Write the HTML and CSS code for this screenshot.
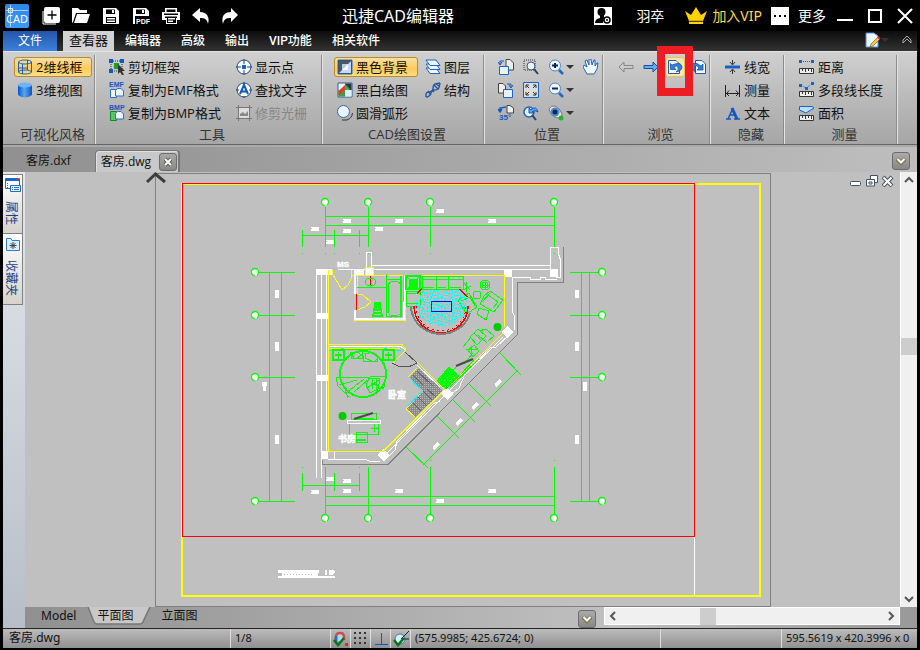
FILE: index.html
```html
<!DOCTYPE html>
<html lang="zh-CN">
<head>
<meta charset="utf-8">
<title>迅捷CAD编辑器</title>
<link rel="stylesheet" href="styles.css">
</head>
<body>
<div class="app">
  <header class="titlebar">
    <svg class="logo" viewBox="0 0 24 24"><defs><linearGradient id="lg" x1="0" y1="0" x2="0" y2="1"><stop offset="0" stop-color="#2f86e8"/><stop offset="1" stop-color="#3a9af8"/></linearGradient></defs><rect width="24" height="24" rx="2" fill="url(#lg)"/><path d="M1 6.500H23M5.500 1V23" stroke="#a9d2ff"/><rect x="3.500" y="4.500" width="4" height="4" fill="none" stroke="#d8ebff"/><text x="12" y="19" text-anchor="middle" class="logo-text">CAD</text></svg>
    <div class="quick">
      <button aria-label="新建"><svg viewBox="0 0 18 18"><path d="M1 4V17H14" fill="none" stroke="#fff"/><rect x="2" y="0" width="16" height="16" rx="2" fill="#fff"/><path d="M10 3.500V12.500M5.500 8H14.500" stroke="#000" stroke-width="1.300"/></svg></button>
      <button aria-label="打开"><svg viewBox="0 0 18 18"><path d="M0 16V1H6L8 3H15V6H4L1 15ZM5 7H18L15 16H2Z" fill="#fff"/></svg></button>
      <button aria-label="保存"><svg viewBox="0 0 18 18"><path d="M1 1H14L17 4V17H1Z" fill="#fff"/><path d="M4 2.500H13V7H4ZM4 10H14V16H4Z" fill="#000"/><path d="M10 3H12V6H10ZM5 11H13V12.500H5ZM5 13.500H13V15H5Z" fill="#fff"/></svg></button>
      <button aria-label="另存为PDF"><svg viewBox="0 0 18 18"><path d="M1 1H14L17 4V9H1ZM1 9H3V17H1Z" fill="#fff"/><path d="M4 2.500H13V7H4Z" fill="#000"/><path d="M10 3H12V6H10Z" fill="#fff"/><text x="4" y="17" class="pdf">PDF</text></svg></button>
      <button aria-label="打印"><svg viewBox="0 0 18 18"><path d="M3 1H15V5H18V13H15V17H4V13H0V5H3Z" fill="#fff"/><path d="M4.500 2.500H13.500V5H4.500ZM2 6.500H16V8H2ZM3 9.500H15V11H14V16H5V11H3Z" fill="#000"/><path d="M6 11H13V12.500H6ZM6 13.500H11V15H6Z" fill="#fff"/></svg></button>
      <button aria-label="撤销"><svg viewBox="0 0 18 18"><path d="M0 8 8 1V5C15 5 18 10 16 17C15 12 13 11 8 11V15Z" fill="#fff"/></svg></button>
      <button aria-label="重做"><svg viewBox="0 0 18 18"><path d="M16 8 9 1V5C2 5-1 10 1 17C2 12 4 11 9 11V15Z" fill="#fff"/></svg></button>
    </div>
    <h1>迅捷CAD编辑器</h1>
    <div class="account">
      <button class="user"><svg viewBox="0 0 18 18"><path fill="#fff" d="M0 0H18V18H0Z"/><circle cx="7.500" cy="5" r="4"/><path d="M6 8H10V11L9 16H1Q1 12 6 11Z"/><circle cx="13" cy="13" r="3" fill="#fff" stroke="#000" stroke-width="1.500"/><circle cx="13" cy="13" r="1"/></svg><span>羽卒</span></button>
      <button class="vip"><svg viewBox="0 0 22 18"><path d="M0 4 6 8 11 0 16 8 22 4 18 14H4ZM4 15H18V17H4Z" fill="#ffd100"/><path d="M4 14H18" stroke="#b87a00"/></svg><span>加入VIP</span></button>
      <button class="more"><svg viewBox="0 0 18 18"><path fill="#fff" d="M0 0H18V18H0Z"/><path d="M3 8H5V10H3ZM8 8H10V10H8ZM13 8H15V10H13Z"/></svg><span>更多</span></button>
    </div>
    <div class="window-buttons">
      <button aria-label="最小化"><svg viewBox="0 0 16 16"><path d="M0 12H16" stroke="#fff" stroke-width="2"/></svg></button>
      <button aria-label="最大化"><svg viewBox="0 0 16 16"><rect x="2" y="2" width="12" height="12" fill="none" stroke="#fff" stroke-width="2"/></svg></button>
      <button aria-label="关闭"><svg viewBox="0 0 16 16"><path d="M1 1 15 15M15 1 1 15" stroke="#fff" stroke-width="2"/></svg></button>
    </div>
  </header>

  <nav class="menu">
    <button class="file">文件</button>
    <button class="current">查看器</button>
    <button>编辑器</button>
    <button>高级</button>
    <button>输出</button>
    <button>VIP功能</button>
    <button>相关软件</button>
    <div class="menu-end">
      <button aria-label="样式"><svg class="i16" viewBox="0 0 16 16"><path d="M1 1H9L13 4V15H1Z" fill="#eef6ff" stroke="#4f8fe0"/><path d="M6 12 13 5 15 7 8 14 5 15Z" fill="#f5c744" stroke="#6a5210" stroke-width=".6"/><path d="M13 5 15 7" stroke="#d23" stroke-width="2"/></svg><i class="caret"></i></button>
      <button aria-label="折叠"><svg class="i10" viewBox="0 0 10 10"><path d="M1 5 5 1 9 5V8L5 4 1 8Z" fill="none" stroke="#aaa"/></svg></button>
    </div>
  </nav>

  <section class="ribbon">
    <div class="group g-style">
      <div class="cols"><div class="col">
        <button class="cmd on"><svg class="i16" viewBox="0 0 16 16"><g fill="none" stroke="#1663c7"><ellipse cx="8" cy="3" rx="6.500" ry="2"/><ellipse cx="8" cy="13" rx="6.500" ry="2"/><path d="M1.500 3V13M14.500 3V13M5.500 5V15M10.500 1V11M1 9H11"/></g></svg>2维线框</button>
        <button class="cmd"><svg class="i16" viewBox="0 0 16 16"><defs><linearGradient id="cy"><stop offset="0" stop-color="#0a55c4"/><stop offset=".45" stop-color="#58a6f5"/><stop offset="1" stop-color="#0f55bd"/></linearGradient></defs><path d="M1 3V13Q8 18 15 13V3Z" fill="url(#cy)"/><ellipse cx="8" cy="3" rx="7" ry="2.500" fill="#6db3fa"/></svg>3维视图</button>
      </div></div>
      <h2>可视化风格</h2>
    </div>
    <div class="group g-tools">
      <div class="cols"><div class="col wide">
        <button class="cmd"><svg class="i16" viewBox="0 0 16 16"><path d="M2 2H13V12H2Z" fill="none" stroke="#333" stroke-dasharray="1 1"/><path d="M0 0H4V4H0ZM11 0H15V4H11ZM0 10H4V14H0Z" fill="#1457c0"/><path d="M5 4H10V10H5Z" fill="#18a028"/><path d="M9 5 16 12H13L15 16 13 16 11 13 9 15Z" fill="#333"/></svg>剪切框架</button>
        <button class="cmd"><svg class="i16" viewBox="0 0 16 16"><text x="0" y="5" class="fmt">EMF</text><g fill="#edf6ff" stroke="#2d6fc8"><path d="M1.500 7.500H7.500V15.500H1.500Z"/><path d="M8.500 6.500H12L14.500 9V14H6.500V8.500Z"/></g></svg>复制为EMF格式</button>
        <button class="cmd"><svg class="i16" viewBox="0 0 16 16"><text x="0" y="5" class="fmt">BMP</text><path d="M1.500 6.500H7.500V15.500H1.500Z" fill="#59c863" stroke="#138820"/><path d="M8.500 6.500H12L14.500 9V14H6.500V8.500Z" fill="#edf6ff" stroke="#2d6fc8"/></svg>复制为BMP格式</button>
      </div><div class="col">
        <button class="cmd"><svg class="i16" viewBox="0 0 16 16"><circle cx="8" cy="8" r="7" fill="#f4faff" stroke="#29486e"/><path d="M8 0V5M8 11V16M0 8H5M11 8H16" stroke="#29486e"/><path d="M6 6H10V10H6Z" fill="#1663c7"/></svg>显示点</button>
        <button class="cmd"><svg class="i16" viewBox="0 0 16 16"><circle cx="8" cy="8" r="7" fill="#f4faff" stroke="#29486e"/><path d="M8 0V3M0 8H3M13 8H16M8 14V16" stroke="#29486e"/><path d="M4 12 8 3 12 12M5.500 9.500H10" fill="none" stroke="#1457c0" stroke-width="2"/></svg>查找文字</button>
        <button class="cmd" disabled><svg class="i16" viewBox="0 0 16 16"><path d="M2.500 0V16M13.500 0V16M0 2.500H16M0 13.500H16" stroke="#777"/><path d="M3 3H13V13H3Z" fill="#ddd"/><path d="M4 11V9L7 7 9 9 12 6V11Z" fill="#888"/></svg>修剪光栅</button>
      </div></div>
      <h2>工具</h2>
    </div>
    <div class="group g-draw">
      <div class="cols"><div class="col">
        <button class="cmd on"><svg class="i16" viewBox="0 0 16 16"><path d="M1 1H15V15H1Z" fill="#1f3b66" stroke="#2d6fc8"/><path d="M2 2H14L2 14Z" fill="#555"/><path d="M14 2V14H2Z" fill="#c4dafa"/><path d="M5 5H11V11H5Z" fill="#fff"/><path d="M5 5H11L5 11Z" fill="#bcd"/></svg>黑色背景</button>
        <button class="cmd"><svg class="i16" viewBox="0 0 16 16"><path d="M1 1H15V15H1Z" fill="#f4f4f4" stroke="#2d5f9c"/><path d="M8 1.500H14.500V8H8Z" fill="#2a3340"/><path d="M1.500 8H8V14.500H1.500Z" fill="#2fa848"/><path d="M1.500 9 8 3V8L3 13H1.500Z" fill="#e23c32"/><path d="M8 2 13 7 8 12Z" fill="#34b34a"/><path d="M8 8H14.500V14.500H8Z" fill="#e5f0ff"/></svg>黑白绘图</button>
        <button class="cmd"><svg class="i16" viewBox="0 0 16 16"><circle cx="6.500" cy="6.500" r="6" fill="#e9f4ff" stroke="#3469b0"/><path d="M15.500 8Q15 13 10 15H5" fill="none" stroke="#333"/></svg>圆滑弧形</button>
      </div><div class="col">
        <button class="cmd"><svg class="i16" viewBox="0 0 16 16"><g fill="#eaf5ff" stroke="#1f63ba"><path d="M1 9H11L15 14.500H5Z"/><path d="M1 5H11L15 10.500H5Z"/><path d="M1 1H11L15 6.500H5Z"/></g></svg>图层</button>
        <button class="cmd"><svg class="i16" viewBox="0 0 16 16"><g fill="none" stroke="#2458a4" stroke-width="1.400"><path d="M1 15C0 6 8 13 8 7S10 2 15 1"/><path d="M1 15C8 15 4 8 9 8S14 7 15 1"/><path d="M3 9 6 13M9 3 13 7M7 8 9 10M11 2 14 4"/></g></svg>结构</button>
      </div></div>
      <h2>CAD绘图设置</h2>
    </div>
    <div class="group g-pos">
      <div class="cols"><div class="col">
        <button class="cmd" aria-label="上一视图"><svg class="i16" viewBox="0 0 16 16"><path d="M8 .5H12L15.500 4V11H8Z" fill="#eee" stroke="#444"/><path d="M1.500 7.500H10.500V15.500H1.500Z" fill="#e8f3ff" stroke="#1f63ba"/><path d="M6 2H2V5M0 3 2 6 4 3" fill="none" stroke="#1457c0"/></svg></button>
        <button class="cmd" aria-label="下一视图"><svg class="i16" viewBox="0 0 16 16"><path d="M.5 1.500H5L7.500 4V11H.5Z" fill="#eee" stroke="#444"/><path d="M5.500 7.500H14.500V15.500H5.500Z" fill="#e8f3ff" stroke="#1f63ba"/><path d="M9 2H13V5M11 3 13 6 15 3" fill="none" stroke="#1457c0"/></svg></button>
        <button class="cmd" aria-label="旋转35°"><svg class="i16" viewBox="0 0 16 16"><path d="M9 .5H12L15.500 3V8H9Z" fill="#eee" stroke="#444"/><path d="M8 2 2 3V6M0 4 2 7 4 4" fill="none" stroke="#1457c0" stroke-width="1.400"/><text x="1" y="15" class="deg">35°</text></svg></button>
      </div><div class="col">
        <button class="cmd" aria-label="窗口缩放"><svg class="i16" viewBox="0 0 16 16"><path d="M1 1H12V11H1Z" fill="none" stroke="#333" stroke-dasharray="1 1"/><circle cx="8" cy="7" r="4" fill="#e8f4ff" stroke="#457"/><path d="M11 10 15 15" stroke="#246" stroke-width="2"/></svg></button>
        <button class="cmd" aria-label="全部显示"><svg class="i16" viewBox="0 0 16 16"><path d="M.5.5H15.500V15.500H.5Z" fill="#ddd" stroke="#1663c7"/><path d="M3 6V3H6M3 3 6 6M10 3H13V6M13 3 10 6M3 10V13H6M3 13 6 10M10 13H13V10M13 13 10 10" fill="none" stroke="#333"/></svg></button>
        <button class="cmd" aria-label="还原缩放"><svg class="i16" viewBox="0 0 16 16"><circle cx="6" cy="7" r="5" fill="#e8f4ff" stroke="#1f63ba" stroke-width="1.500"/><path d="M9 10 13 15" stroke="#246" stroke-width="2"/><path d="M6 8V3L8 5Q13 0 15 7Q11 4 9 7L11 8Z" fill="#60a7ef" stroke="#1457c0"/></svg></button>
      </div><div class="col">
        <button class="cmd" aria-label="放大"><svg class="i16" viewBox="0 0 16 16"><circle cx="7" cy="6.500" r="5.500" fill="#eef7ff" stroke="#4a83cd"/><path d="M11 11 15 15" stroke="#1d67c7" stroke-width="2.500"/><path d="M7 4V9M4 6.500H10" stroke="#08265c" stroke-width="2"/></svg><i class="caret"></i></button>
        <button class="cmd" aria-label="缩小"><svg class="i16" viewBox="0 0 16 16"><circle cx="7" cy="6.500" r="5.500" fill="#eef7ff" stroke="#4a83cd"/><path d="M11 11 15 15" stroke="#1d67c7" stroke-width="2.500"/><path d="M4 6.500H10" stroke="#08265c" stroke-width="2"/></svg><i class="caret"></i></button>
        <button class="cmd" aria-label="视点"><svg class="i16" viewBox="0 0 16 16"><path d="M1 4Q3 0 7 1Q12 3 14 9Q14 14 10 13Q3 12 1 4Z" fill="#e4e4e4" stroke="#777"/><circle cx="7" cy="7" r="4.500" fill="#4b8fd0"/><circle cx="7" cy="7" r="2.500" fill="#102a50"/><circle cx="13" cy="13" r="2.500" fill="#20b52a"/></svg><i class="caret"></i></button>
      </div><div class="col">
        <button class="cmd" aria-label="平移"><svg class="i16" viewBox="0 0 16 16"><path d="M4 15 0 8 1 6 4 8 2 2 4 1 6 6 6 0 8 0 9 6 11 1 12 1 12 7 14 4 15 4 14 10 11 15Z" fill="#f0f8ff" stroke="#1f63ba"/></svg></button>
      </div></div>
      <h2>位置</h2>
    </div>
    <div class="group g-browse">
      <div class="cols">
        <button class="cmd" aria-label="后退"><svg class="i16" viewBox="0 0 16 16"><path d="M1 8 6 3V6.500H15V9.500H6V13Z" fill="#ccc" stroke="#858585"/></svg></button>
        <button class="cmd" aria-label="前进"><svg class="i16" viewBox="0 0 16 16"><path d="M15 8 10 3V6.500H1V9.500H10V13Z" fill="#64acf3" stroke="#174f9d"/></svg></button>
        <button class="cmd marked" aria-label="逆时针旋转"><svg class="i16" viewBox="0 0 16 16"><path d="M1.500 1.500H9L12.500 5V14.500H1.500Z" fill="#f3f9ff" stroke="#225ba8"/><path d="M3.500 4.500V10.500H9L7 8.500Q10 6 11 8Q12 11 9 13Q15 12 15 8Q14 2 5 6Z" fill="#2f83dd" stroke="#0e4696" stroke-width=".7"/></svg></button>
        <button class="cmd" aria-label="顺时针旋转"><svg class="i16" viewBox="0 0 16 16"><path d="M4.500 1.500H11L14.500 5V14.500H4.500Z" fill="#f3f9ff" stroke="#225ba8"/><path d="M12 5V11H6L8 9Q5 5 4 8Q3 11 5 13Q-1 11 1 6Q4 2 10 7Z" fill="#2f83dd" stroke="#0e4696" stroke-width=".7"/></svg></button>
      </div>
      <h2>浏览</h2>
    </div>
    <div class="group g-hide">
      <div class="cols"><div class="col">
        <button class="cmd"><svg class="i16" viewBox="0 0 16 16"><path d="M0 8H15" stroke="#1663c7" stroke-width="3"/><path d="M7.500 1V5M7.500 15V11M5 3 7.500 6 10 3M5 13 7.500 10 10 13" fill="none" stroke="#333"/></svg>线宽</button>
        <button class="cmd"><svg class="i16" viewBox="0 0 16 16"><path d="M.5 3V15M14.500 3V15M1 11.500H14M4 8.500 1.500 11.500 4 14M11 8.500 13.500 11.500 11 14" fill="none" stroke="#222"/></svg>测量</button>
        <button class="cmd"><svg class="i16" viewBox="0 0 16 16"><path d="M1 14H6M9 14H15M3 14 8 3M5 10H11" fill="none" stroke="#1457c0" stroke-width="1.500"/><path d="M7 3 12 14" stroke="#1457c0" stroke-width="3"/></svg>文本</button>
      </div></div>
      <h2>隐藏</h2>
    </div>
    <div class="group g-measure">
      <div class="cols"><div class="col">
        <button class="cmd"><svg class="i16" viewBox="0 0 16 16"><path d="M0 1H3V4H0ZM12 1H15V4H12Z" fill="#1663c7"/><path d="M4 2.500H12" stroke="#1663c7" stroke-dasharray="1 1"/><path d="M.5 9.500H14.500V14.500H.5Z" fill="#eee" stroke="#333"/><path d="M3.500 10V12M6.500 10V13M9.500 10V12M12.500 10V13" stroke="#333"/></svg>距离</button>
        <button class="cmd"><svg class="i16" viewBox="0 0 16 16"><path d="M0 2H3V5H0ZM6 5H9V8H6ZM12 0H15V3H12Z" fill="#1663c7"/><path d="M2 3 7 6 13 2" fill="none" stroke="#1663c7" stroke-dasharray="1 1"/><path d="M.5 9.500H14.500V14.500H.5Z" fill="#eee" stroke="#333"/><path d="M3.500 10V12M6.500 10V13M9.500 10V12M12.500 10V13" stroke="#333"/></svg>多段线长度</button>
        <button class="cmd"><svg class="i16" viewBox="0 0 16 16"><path d="M.5 1.500H13L15 3 7 8 .5 5Z" fill="#bcdcff" stroke="#1663c7"/><path d="M.5 10.500H14.500V15.500H.5Z" fill="#eee" stroke="#333"/><path d="M3.500 11V13M6.500 11V14M9.500 11V13M12.500 11V14" stroke="#333"/></svg>面积</button>
      </div></div>
      <h2>测量</h2>
    </div>
  </section>

  <nav class="doc-tabs">
    <button class="doc">客房.dxf</button>
    <div class="doc open"><button class="doc-name">客房.dwg</button><button class="box" aria-label="关闭"><svg class="i10" viewBox="0 0 10 10"><path d="M2 2 8 8M8 2 2 8" stroke="#655d42" stroke-width="4"/><path d="M2 2 8 8M8 2 2 8" stroke="#fff" stroke-width="2"/></svg></button></div>
    <button class="box end" aria-label="标签列表"><svg class="i10" viewBox="0 0 10 10"><path d="M1 3 5 7 9 3" fill="none" stroke="#7c7140" stroke-width="4"/><path d="M1.500 3 5 6.500 8.500 3" fill="none" stroke="#fff" stroke-width="2"/></svg></button>
  </nav>

  <main class="work">
    <aside class="side">
      <button><svg class="i16" viewBox="0 0 16 16"><path d="M.5 1.500H14.500V11.500H.5Z" fill="#fff" stroke="#236bc4"/><path d="M1 1H14V4H1Z" fill="#1764ce"/><path d="M12 1H14V3H12Z" fill="#e33"/><path d="M2.500 6V11" stroke="#236bc4" stroke-dasharray="1 1"/><path d="M5.500 8.500H15.500V14.500H5.500Z" fill="#eef7ff" stroke="#236bc4"/><path d="M7 10.500H8M9 10.500H14M7 12.500H8M9 12.500H14" stroke="#236bc4"/></svg><span>属性</span></button>
      <button><svg class="i16" viewBox="0 0 16 16"><path d="M1.500 2.500H6L7 4.500H14.500V14.500H1.500Z" fill="#dceeff" stroke="#2a80d8"/><path d="M8 6V13M4.500 9.500H11.500M5.500 7 10.500 12M10.500 7 5.500 12" stroke="#345"/></svg><span>收藏夹</span></button>
    </aside>

    <div class="canvas">
      <svg class="drawing" viewBox="25 172 875 435" shape-rendering="crispEdges">
        <defs>
          <pattern id="hatch" width="2" height="2" patternUnits="userSpaceOnUse"><rect width="2" height="2" fill="#8a8a8a"/><path d="M0 0H1V1H0Z" fill="#b8b8b8"/></pattern>
          <pattern id="rug" width="11" height="9" patternUnits="userSpaceOnUse"><path d="M0 0H3V1H0ZM4 1H6V3H4ZM1 2H2V5H1ZM3 4H5V5H3ZM6 4H7V6H6ZM0 6H2V7H0ZM2 1H3V2H2ZM5 3H6V4H5ZM8 0H10V1H8ZM7 2H8V3H7ZM9 2H10V4H9ZM8 5H11V6H8ZM3 6H4V8H3ZM5 7H8V8H5ZM9 7H10V9H9ZM1 8H3V9H1ZM10 1H11V2H10Z" fill="#00ffff"/></pattern>
          <g id="bubble" shape-rendering="auto"><circle r="3.500" fill="#fff" stroke="#0f0" stroke-width="1.300"/><path d="M-1.500-1.500H2V3.500H-.5V1H-1.500Z" fill="#fff"/></g>
          <g id="num"><path d="M-4 0H4" stroke="#fff" stroke-width="4"/><path d="M-3.500-1.500V-.5" stroke="#c0c0c0"/></g>
        </defs>
        <g fill="none">
          <path d="M155.500 606.500V173.500H770.500V606.500Z" stroke="#808080"/>
          <path d="M182 184H760V596H182Z" stroke="#ff0" stroke-width="2"/>
          <path d="M694.500 537V595" stroke="#fff"/>
          <path d="M182.500 183.500H694.500V536.500H182.500Z" stroke="#f00"/>
          <path d="M147 182 155.500 174 165 182" stroke="#3c3c3c" stroke-width="3" shape-rendering="auto"/>

          <path stroke="#0f0" d="M325.500 207V247M368.500 207V247M430.500 207V247M554.500 207V247M325 216.500H555M325 225.500H555M302 235.500H369M302.500 230V247M334.500 230V247M359.500 230V247M302 253.500H303M325 253.500H326M334 253.500H335M359 253.500H360M368 253.500H369M430 253.500H431M554 253.500H555
            M258 272.500H295M258 315.500H295M258 377.500H295M258 501.500H295M269.500 272V501M281.500 272V501
            M570 272.500H599M570 315.500H599M570 377.500H599M570 501.500H599M581.500 272V501M589.500 272V501
            M325.500 467V514M368.500 467V514M430.500 467V514M554.500 467V514M325 496.500H555M325 505.500H555M302 485.500H360M302.500 473V491M334.500 473V491M359.500 473V491M302 467.500H303M359 467.500H360M430 460.500H431M554 460.500H555
            M424 464 517 371M406 447 428 468M437 416 459 438M453 400 475 422M469 384 491 406M500 353 521 375"/>
          <path stroke="#0f0" stroke-width="2" d="M423 464H425M516 371H518"/>

          <path stroke="#808080" d="M563.500 247V282.500H517.500V334.500L388 464.500H322.500V460"/>
          <g stroke="#fff">
            <path d="M316.500 270V478M321.500 275V478M326.500 275V452M371 265.500H550M338 269.500H504M512 269.500H550M550.500 269V247.500H558.500V254L560.500 260V277.500H556M512 277.500H530V279.500H540V277.500H545V279.500H557M512.500 277V312L514.500 316V330M366.500 267V252.500H371.500V267M329 346.500H401L405 350M334.500 452V459M328 459.500H366L370 461.500H380"/>
            <path d="M503 337 386 454M509 335 496 347 491 347 474 365 465 374 459 388 450 395M440 401 433 404 397 441 395 450 388 457M417 365 440 387"/>
          </g>
          <path fill="#fff" d="M316 269H332V275H316ZM317 313H328V319H317ZM317 375H328V381H317ZM321 451H328V459H321ZM504 269H512V277H504ZM550 269H558V277H550ZM501 332 507 326 514 332 507 338ZM440 393 446 387 453 394 447 400ZM377 455 383 449 390 456 384 461ZM354 270H364V275H354Z"/>
          <g stroke="#ff0">
            <path d="M328.500 275V451.500H383L442 392.500M453 383 504 332M352 275.500H504.500V327M329 344.500H402L406 350 393 363M354 320.500H405.500V275M357.500 275V294M329 348.500H400M417 362 446 391M417 368 408 377M422 391 406 409 415 417M328 270V275"/>
            <path d="M332.500 270V274L342 290 348 285Q352 280 352 270M357 294 363 295 371 302 365 307 357 310"/>
            <path d="M365 267.500H373V275.500H365Z" fill="#fff"/>
          </g>
          <path stroke="#fff" stroke-width="2" d="M355 275V294M355 310V319H404V276"/>
          <path stroke="#f00" d="M356.500 294V310M370.500 276V287"/>
          <path stroke="#00f5ff" d="M403.500 274V302M341 348.500H344M384 348.500H387M330 350.500H333M389 350.500H401M410 378 422 391 408 406"/>
          <path stroke="#0f0" d="M333 349.500H389"/>

          <g stroke="#0f0">
            <path d="M357 287.500H386M386.500 275V316.500H402M386 279.500H401"/>
            <path d="M401 276V317" stroke-width="2"/>
            <ellipse cx="370.500" cy="282" rx="5" ry="4"/>
            <rect x="388.500" y="281.500" width="12" height="34" rx="4"/>
            <path d="M375 303H380L382 316H373ZM376 304H379V310H376ZM373 313H382" stroke-width="1.500"/>
            <rect x="406" y="276" width="14" height="13" stroke-width="1.500"/>
            <path d="M406 276 420 290M420 276 406 290M409 279H417V287H409Z"/>
            <path d="M410 280H416V286H410Z" fill="#0f0"/>
            <path d="M406 291H420V306H406ZM407 293.500H419M407 303.500H419"/>
            <path d="M422 276H463V289H422ZM436.500 276V289M448.500 276V289M422 279.500H463M424 287H434M438 287H446M450 287H461"/>
            <circle cx="485" cy="285" r="5"/><circle cx="485" cy="285" r="3"/>
            <path d="M485 280V290M480 285H490M464 283 470 290M463 290 471 286M466 282V292"/>
            <circle cx="477" cy="295" r="4"/>
            <path d="M458 300 469 293 477 307 466 314ZM461 301 470 297 475 306M459 303 467 312M484 296 490 291 503 300 494 312 480 304ZM488 295 498 302 493 308M482 302 490 293M479 308 489 311 486 320 477 314Z"/>
            <path d="M470 337 478 329 486 336 477 345ZM474 333 482 341M479 331 486 329 494 336 488 341M471 337 463 347M478 335 487 343"/>
            <path d="M468 350 474 345 479 351 473 357ZM466 349H477M471 346V354M473 353 464 364M456 367 450 373M479 359 450 387M474 360 461 374"/>
            <path d="M437 381 449 367 459 376 446 389Z" fill="#0f0"/>
            <path d="M333 350H344V360H333ZM383 350H394V360H383ZM335 355H342M338.500 352V359M385 355H392M388.500 352V359" stroke-width="1.500"/>
            <circle cx="363" cy="374" r="23" stroke-width="2"/>
            <path d="M336 377Q354 379 370 377T386 377M336 377 338 386 349 397M339 385 357 380M346 393 364 379M354 392 369 379M350 353 357 352 362 355 355 359ZM365 354 372 352 378 358 374 362 365 358ZM369 378 380 379 378 389 370 393 366 386ZM371 383 378 386"/>
            <path d="M386 376 384 387 376 393M345 390 348 398M351 352V358H362V352M363 356V361H377V355M372 379V389M376 379V391M367 388 379 380"/>
            <path d="M351 413H376V419H351ZM354 418H373V421M349 423H378V434H349ZM356 432H367V442H356ZM371 428H378M374.500 424V432"/>
            <path d="M357 440H366" stroke-width="2"/>
          </g>
          <path d="M439 382 449 371 455 377 445 387M441 380 452 381M447 374 448 387" stroke="#b8bdb8" stroke-dasharray="1 2"/>
          <path d="M347 420H380V423H347Z" stroke="#fff"/>
          <path d="M354 419 373 413M456 366 473 359" stroke="#4a4a4a" stroke-width="2" shape-rendering="auto"/>
          <g fill="#00cc00" shape-rendering="auto"><circle cx="342.500" cy="416" r="4"/><circle cx="497.500" cy="327" r="4"/></g>

          <path d="M420 290H462L467 300 467 308A27 26 0 0 1 415 306V300H420Z" fill="url(#rug)"/>
          <path d="M414 306A27 27 0 0 0 468 306M417 293 422 289M460 289 467 297" stroke="#f00" stroke-width="1.500"/>
          <path d="M416 306A25 25 0 0 0 466 306" stroke="#f00" stroke-dasharray="2 3"/>
          <path d="M411 307A30 28 0 0 0 470 313" stroke="#808080" stroke-width="2"/>
          <path d="M431.500 301.500H451.500V311.500H431.500Z" stroke="#00f"/>

          <path fill="url(#hatch)" d="M418 368 443 391 415 417 407 409 423 391 410 377Z"/>
          <path d="M423 391 432 400M418 397 427 406M413 403 421 411M413 375 423 385M417 371 433 386M427 389 436 397" stroke="#626262"/>
          <path d="M405 352 417 363M392 363Q404 371 417 363" stroke="#555"/>
        </g>
        <use href="#bubble" x="325" y="202"/><use href="#bubble" x="368" y="202"/><use href="#bubble" x="430" y="202"/><use href="#bubble" x="554" y="202"/>
        <use href="#bubble" x="255" y="272"/><use href="#bubble" x="255" y="315"/><use href="#bubble" x="255" y="377"/><use href="#bubble" x="255" y="501"/>
        <use href="#bubble" x="602" y="272"/><use href="#bubble" x="602" y="315"/><use href="#bubble" x="602" y="377"/><use href="#bubble" x="602" y="501"/>
        <use href="#bubble" x="325" y="518"/><use href="#bubble" x="368" y="518"/><use href="#bubble" x="430" y="518"/><use href="#bubble" x="554" y="518"/>
        <use href="#num" x="347" y="221"/><use href="#num" x="399" y="221"/><use href="#num" x="492" y="221"/><use href="#num" x="440" y="211"/><use href="#num" x="315" y="229"/><use href="#num" x="347" y="231"/><use href="#num" x="379" y="229"/><use href="#num" x="330" y="242"/>
        <use href="#num" x="315" y="492"/><use href="#num" x="347" y="491"/><use href="#num" x="399" y="491"/><use href="#num" x="492" y="491"/><use href="#num" x="440" y="501"/><use href="#num" x="330" y="479"/><use href="#num" x="347" y="481"/>
        <g fill="#fff"><path d="M275 290H279V298H275ZM275 342H279V351H275ZM275 435H279V444H275ZM262 382H267V386H266V391H263V386H262ZM575 290H579V298H575ZM575 342H579V351H575ZM575 435H579V444H575ZM583 382H587V391H583Z"/></g>
        <use href="#num" transform="translate(436 446) rotate(-45)"/><use href="#num" transform="translate(459 422) rotate(-45)"/><use href="#num" transform="translate(475 406) rotate(-45)"/><use href="#num" transform="translate(498 383) rotate(-45)"/>
        <text x="337" y="267" class="room latin">MS</text>
        <text x="388" y="398" class="room">卧室</text>
        <text x="338" y="442" class="room">书房</text>
        <path fill="#fff" d="M278 570H319V573H278ZM282 573H318V576H282ZM325 570H327V575H325ZM329 570H333L335 572 333 575H329ZM278 576H335V578H278Z"/>
        <path d="M284 574.500H314" stroke="#c0c0c0" stroke-dasharray="1 2"/>
      </svg>
      <div class="mdi">
        <button aria-label="最小化窗口"><svg viewBox="0 0 12 12"><rect x=".5" y="6.500" width="10" height="4" rx="1" fill="#fff" stroke="#44505e"/></svg></button>
        <button aria-label="还原窗口"><svg viewBox="0 0 12 12"><path d="M4.500.5H11.500V7.500H4.500Z" fill="#fff" stroke="#44505e"/><path d="M.5 4.500H8.500V11H.5Z" fill="#fff" stroke="#44505e"/><path d="M3 7H6V9H3Z" fill="none" stroke="#44505e"/></svg></button>
        <button aria-label="关闭窗口"><svg viewBox="0 0 12 12"><path d="M1 2 10 11M10 2 1 11" stroke="#44505e" stroke-width="4"/><path d="M1.500 2.500 9.500 10.500M9.500 2.500 1.500 10.500" stroke="#fff" stroke-width="2"/></svg></button>
      </div>
    </div>
    <div class="vscroll">
      <button aria-label="向上"><svg class="i10" viewBox="0 0 10 10"><path d="M1 7 5 3 9 7" fill="none" stroke="#555" stroke-width="2"/></svg></button>
      <i class="space a"></i><i class="thumb"></i><i class="space b"></i>
      <button aria-label="向下"><svg class="i10" viewBox="0 0 10 10"><path d="M1 3 5 7 9 3" fill="none" stroke="#555" stroke-width="2"/></svg></button>
    </div>

    <div class="sheets">
      <button>Model</button>
      <button class="active"><svg viewBox="0 0 64 19" preserveAspectRatio="none"><path d="M1 0 7 16Q8 18 10 18H52Q54 18 55 16L62 0" fill="#c8c8c8" stroke="#777" stroke-width="1.500"/></svg><span>平面图</span></button>
      <button>立面图</button>
      <button class="box end" aria-label="布局列表"><svg class="i10" viewBox="0 0 10 10"><path d="M1 3 5 7 9 3" fill="none" stroke="#7c7140" stroke-width="4"/><path d="M1.500 3 5 6.500 8.500 3" fill="none" stroke="#fff" stroke-width="2"/></svg></button>
      <div class="hscroll">
        <button aria-label="向左"><svg class="i10" viewBox="0 0 10 10"><path d="M7 1 3 5 7 9" fill="none" stroke="#555" stroke-width="2"/></svg></button>
        <i class="space a"></i><i class="thumb"></i><i class="space b"></i>
        <button aria-label="向右"><svg class="i10" viewBox="0 0 10 10"><path d="M3 1 7 5 3 9" fill="none" stroke="#555" stroke-width="2"/></svg></button>
      </div>
    </div>
  </main>

  <footer class="status">
    <span class="name">客房.dwg</span>
    <span>1/8</span>
    <button aria-label="对象捕捉"><svg class="i16" viewBox="0 0 16 16"><path d="M3 11V6Q3 2 7 2T11 6V9" fill="#a8dcec" stroke="#d24a4a" stroke-width="2.500"/><path d="M3 5V11" stroke="#36c" stroke-width="2.500"/><path d="M1 9 5 14 11 7" fill="none" stroke="#0a7417" stroke-width="2.500"/><path d="M12 12H15V15H12Z" fill="#e22"/></svg></button>
    <button aria-label="栅格"><svg class="i16" viewBox="0 0 16 16"><path d="M1 2H16M1 7H16M1 12H16" stroke="#333" stroke-width="2" stroke-dasharray="2 3"/></svg></button>
    <button aria-label="正交"><svg class="i16" viewBox="0 0 16 16"><path d="M8.500 2V13M2 13.500H15" stroke="#1457c0"/></svg></button>
    <button aria-label="追踪"><svg class="i16" viewBox="0 0 16 16"><circle cx="7" cy="8" r="5" fill="#d6edff" stroke="#3a78b8"/><path d="M8 8 16 0M9 8H16" stroke="#222"/><path d="M1 9 5 14 11 7" fill="none" stroke="#0a7417" stroke-width="2.500"/></svg></button>
    <span>(575.9985; 425.6724; 0)</span>
    <span></span>
    <span>595.5619 x 420.3996 x 0</span>
  </footer>
</div>
</body>
</html>
```

FILE: styles.css
```css
* { box-sizing: border-box; }

body {
  margin: 0;
  background: #000;
  color: #111;
  font: 12px/16px "Noto Sans", "Noto Sans CJK SC", sans-serif;
}

button {
  display: flex;
  align-items: center;
  margin: 0;
  padding: 0;
  border: 0;
  background: none;
  color: inherit;
  font: inherit;
  white-space: nowrap;
}

svg { display: block; flex: none; }
.i16 { width: 16px; height: 16px; }
.i10 { width: 10px; height: 10px; }

.app {
  display: grid;
  grid-template-rows: 31px 20px 94px 27px 1fr 20px;
  min-height: 100vh;
  padding: 0 3px 2px;
}

/* title bar */
.titlebar { display: flex; align-items: center; color: #fff; font-size: 14px; }
.logo { width: 24px; height: 24px; margin-left: 2px; }
.logo-text { fill: #fff; font: 11px "Noto Sans", sans-serif; }
.pdf { fill: #fff; font: bold 7px "Liberation Sans", sans-serif; }
.quick { display: flex; margin-left: 7px; }
.quick button { width: 30px; justify-content: center; }
.quick svg { width: 18px; height: 18px; }
.titlebar h1 { margin: 0 0 0 96px; font-size: 16px; font-weight: 400; line-height: 24px; white-space: nowrap; }
.account { display: flex; margin-left: auto; }
.account button { gap: 5px; }
.account svg { width: 18px; height: 18px; }
.account .user { gap: 24px; margin-right: 21px; }
.account .vip { margin-right: 9px; color: #ffd84a; }
.account .vip svg { width: 22px; }
.account .more { gap: 9px; }
.window-buttons { display: flex; gap: 14px; margin: 0 4px 0 11px; }
.window-buttons svg { width: 16px; height: 16px; }

/* menu row */
.menu { display: flex; background: linear-gradient(#0c0c0c, #333); color: #fff; font-family: Roboto, "Noto Sans CJK SC", sans-serif; font-weight: 500; }
.menu button { padding: 0 10px; }
.menu .file { width: 54px; margin-right: 6px; padding: 0; justify-content: center; background: linear-gradient(#2554a8, #3b82dc); font-weight: 400; }
.menu .current { margin-right: 1px; padding: 0 6px; background: #d2d2d2; color: #111; font-size: 13px; font-weight: 400; }
.menu .menu-end { display: flex; margin-left: auto; }
.menu .menu-end button { padding: 0 5px 3px 8px; }

/* ribbon */
.ribbon {
  display: flex;
  padding-top: 3px;
  border-top: 1px solid #e4e4e4;
  border-bottom: 1px solid #666;
  background: linear-gradient(#d0d0d0, #bcbcbc 45%, #a6a6a6);
  font-family: "Open Sans", "Noto Sans CJK SC", sans-serif;
  font-size: 13px;
}
.group {
  display: flex;
  flex-direction: column;
  flex: none;
  padding: 2px 0 0 11px;
  border-right: 1px solid #e6e6e6;
  box-shadow: inset -1px 0 #8a8a8a;
}
.group h2 { margin: auto 0 0 -4px; color: #333; font-size: 13px; font-weight: 400; line-height: 20px; text-align: center; }
.cols { display: flex; gap: 4px; }
.col { display: flex; flex-direction: column; gap: 3px; }
.col.wide { width: 123px; }
.cmd { gap: 3px; height: 20px; padding: 0 2px; border: 1px solid transparent; border-radius: 3px; }
.cmd.on { padding-right: 9px; border-color: #c08a28; background: linear-gradient(#fbe0a0, #fdc95a 60%, #ffdf80); }
.cmd:disabled { color: #868686; }
.g-style { width: 93px; }
.g-tools { width: 227px; }
.g-draw { width: 162px; }
.g-pos { width: 119px; }
.g-browse { width: 107px; }
.g-hide { width: 74px; }
.g-measure { width: 113px; }
.g-tools, .g-pos { padding-left: 10px; }
.g-pos .cols, .g-browse .cols { gap: 3px; }
.fmt { fill: #1457c0; font: bold 7px "Liberation Sans", sans-serif; }
.deg { fill: #1457c0; font: bold 8px "Liberation Sans", sans-serif; }
.caret { border: 4px solid transparent; border-top-color: #333; border-bottom: 0; }
.g-pos .cmd { gap: 2px; }
.marked { position: relative; padding: 0 1px; border-color: #e8c060; background: #fbe6a4; }
.marked::after {
  content: "";
  position: absolute;
  z-index: 2;
  inset: -12px -9px -20px -9px;
  border: 8px solid #ee1c25;
}

/* document tabs */
.doc-tabs {
  display: flex;
  align-items: flex-end;
  padding: 0 7px 0 23px;
  border-top: 2px solid #aaa;
  background: linear-gradient(90deg, #909090, #bebebe);
  font-family: "Open Sans", "Noto Sans CJK SC", sans-serif;
}
.doc { display: flex; align-items: center; height: 22px; }
.doc.open { gap: 8px; margin-left: 24px; padding: 0 1px 0 5px; border: 1px solid #777; border-bottom: 0; border-right-width: 2px; border-radius: 4px 4px 0 0; background: #c8c8c8; box-shadow: inset 1px 1px #e0e0e0; }
.box { width: 18px; height: 18px; justify-content: center; border: 1px solid #6c6c6c; border-radius: 3px; background: linear-gradient(#aaa, #888); }
.box.end { margin-left: auto; }
.doc-tabs .end { margin-bottom: 2px; }

/* work area */
.work { display: grid; grid-template: 1fr 21px / 22px 1fr 17px; background: #9c9c9c; }
.side { grid-row: 1 / 3; padding-top: 2px; background: linear-gradient(#e4e8ec, #b8bec8); }
.side button {
  flex-direction: column;
  align-items: flex-start;
  gap: 8px;
  width: 20px;
  padding: 2px 2px 8px;
  border: 1px solid #808080;
  border-left: 0;
  background: linear-gradient(#fff, #d6d3cc);
  color: #15428b;
}
.side button + button { border-top: 0; }
.side span { writing-mode: vertical-rl; text-orientation: sideways; line-height: 12px; }
.canvas { position: relative; background: #c0c0c0; }
.drawing { width: 100%; height: 100%; }
.room { fill: #fff; font: bold 9px "Noto Sans CJK SC", sans-serif; stroke: #fff; stroke-width: .4px; }
.room.latin { font-family: "Liberation Sans", sans-serif; font-size: 8px; }
.mdi { position: absolute; top: 3px; right: 6px; display: flex; gap: 4px; }
.mdi svg { width: 12px; height: 12px; }

.vscroll, .hscroll { display: flex; background: #f0f0f0; }
.vscroll { flex-direction: column; border-left: 1px solid #fff; }
.vscroll button, .hscroll button { width: 16px; height: 16px; justify-content: center; }
.thumb { flex: none; width: 16px; height: 17px; background: #cdcdcd; }
.vscroll .a { flex: 150; }
.vscroll .b { flex: 236; }

.sheets { grid-column: 2 / 4; display: flex; padding-right: 17px; background: linear-gradient(90deg, #909090, #c0c0c0 66%, #999); }
.sheets > button { height: 18px; }
.sheets > button:first-child { margin-left: 16px; }
.sheets .active { position: relative; margin: 0 9px 0 11px; padding: 0 19px 0 10px; }
.sheets .active svg { position: absolute; inset: 0; width: 100%; height: 100%; }
.sheets .active span { position: relative; }
.sheets .box { align-self: flex-end; margin-right: 8px; }
.hscroll { width: 296px; height: 18px; border: 1px solid #fff; }
.hscroll .a { flex: 79; }
.hscroll .b { flex: 167; }

/* status bar */
.status {
  display: grid;
  grid-template-columns: 227px 100px repeat(4, 20px) 250px 1fr 136px;
  border-top: 1px solid #222;
  background: linear-gradient(#bcbcbc, #909090);
  font-size: 11px;
}
.status > * { padding-left: 4px; border-left: 1px solid #ddd; line-height: 17px; white-space: nowrap; }
.status button { justify-content: center; padding: 0; }
.status .name { padding-left: 6px; border-left: 0; font-size: 12px; }
```
